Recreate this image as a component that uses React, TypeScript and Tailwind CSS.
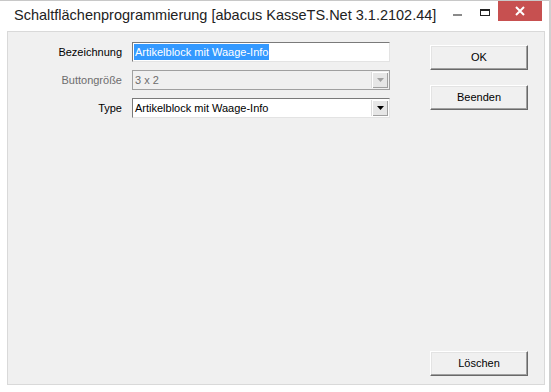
import React from 'react';

const ctl = "font-['Liberation_Sans',Arial,sans-serif] text-[11px]";

function Arrow({ disabled }: { disabled?: boolean }) {
  return (
    <div className="flex h-full w-[17px] items-center justify-center border-l border-[#dcdcdc] bg-[#e6e6e6] shadow-[inset_1px_1px_0_#fff,inset_-1px_-1px_0_#a0a0a0]">
      <svg width="7" height="4" viewBox="0 0 7 4">
        <path d="M0 0h7L3.5 4z" fill={disabled ? '#a0a0a0' : '#000'} />
      </svg>
    </div>
  );
}

function Btn({ label }: { label: string }) {
  return (
    <button
      className={`${ctl} h-[25px] w-[98px] bg-[#f0f0f0] text-black border border-t-white border-l-white border-r-[#696969] border-b-[#696969] shadow-[inset_-1px_-1px_0_#a0a0a0,inset_1px_1px_0_#e3e3e3]`}
    >
      {label}
    </button>
  );
}

export default function App() {
  return (
    <div className="h-[392px] w-[551px] overflow-hidden border-r-2 border-[#d0d0d0] bg-white">
      {/* title bar */}
      <div className="flex h-[31px] items-start border-t border-[#c8c8c8]">
        <div className="whitespace-nowrap pl-[14px] pt-[4px] font-['Liberation_Sans',Arial,sans-serif] text-[14.5px] leading-[20px] text-[#222]">
          Schaltflächenprogrammierung [abacus KasseTS.Net 3.1.2102.44]
        </div>
        <div className="ml-auto flex h-[20px] items-start">
          <div className="flex h-[20px] w-[27px] justify-center pt-[13px]">
            <div className="h-[2px] w-[9px] bg-[#8a8a8a]" />
          </div>
          <div className="flex h-[20px] w-[27px] justify-center pt-[8px]">
            <div className="h-[7px] w-[10px] border border-t-2 border-[#222]" />
          </div>
          <div className="flex h-[20px] w-[44px] items-center justify-center bg-[#c75050]">
            <svg width="10" height="10" viewBox="0 0 10 10">
              <path d="M1 1l8 8M9 1l-8 8" stroke="#fff" strokeWidth="2" />
            </svg>
          </div>
          <div className="w-[7px]" />
        </div>
      </div>

      {/* client area */}
      <div className="ml-[7px] flex h-[354px] w-[538px] border border-[#d9d9d9] bg-[#f0f0f0]">
        <div className={`${ctl} flex flex-col gap-[8px] pt-[10px]`}>
          <div className="flex h-[20px] items-center">
            <div className="w-[114px] text-right text-black">Bezeichnung</div>
            <div className="ml-[10px] flex h-[20px] w-[258px] items-center border border-[#7a7a7a] border-r-[#e3e3e3] border-b-[#e3e3e3] bg-white px-[1px]">
              <span className="bg-[#3399ff] px-[1px] leading-[16px] text-white">Artikelblock mit Waage-Info</span>
            </div>
          </div>
          <div className="flex h-[20px] items-center">
            <div className="w-[114px] text-right text-[#6d6d6d]">Buttongröße</div>
            <div className="ml-[10px] flex h-[20px] w-[258px] items-center border border-[#a0a0a0] bg-[#f0f0f0] p-[1px]">
              <span className="flex-1 pl-[1px] text-[#6d6d6d]">3 x 2</span>
              <Arrow disabled />
            </div>
          </div>
          <div className="flex h-[20px] items-center">
            <div className="w-[114px] text-right text-black">Type</div>
            <div className="ml-[10px] flex h-[20px] w-[258px] items-center border border-[#7a7a7a] border-r-[#e3e3e3] border-b-[#e3e3e3] bg-white p-[1px]">
              <span className="flex-1 pl-[1px] text-black">Artikelblock mit Waage-Info</span>
              <Arrow />
            </div>
          </div>
        </div>
        <div className="ml-auto mr-[16px] flex flex-col pb-[8px] pt-[13px]">
          <div className="flex flex-col gap-[15px]">
            <Btn label="OK" />
            <Btn label="Beenden" />
          </div>
          <div className="mt-auto">
            <Btn label="Löschen" />
          </div>
        </div>
      </div>
    </div>
  );
}
